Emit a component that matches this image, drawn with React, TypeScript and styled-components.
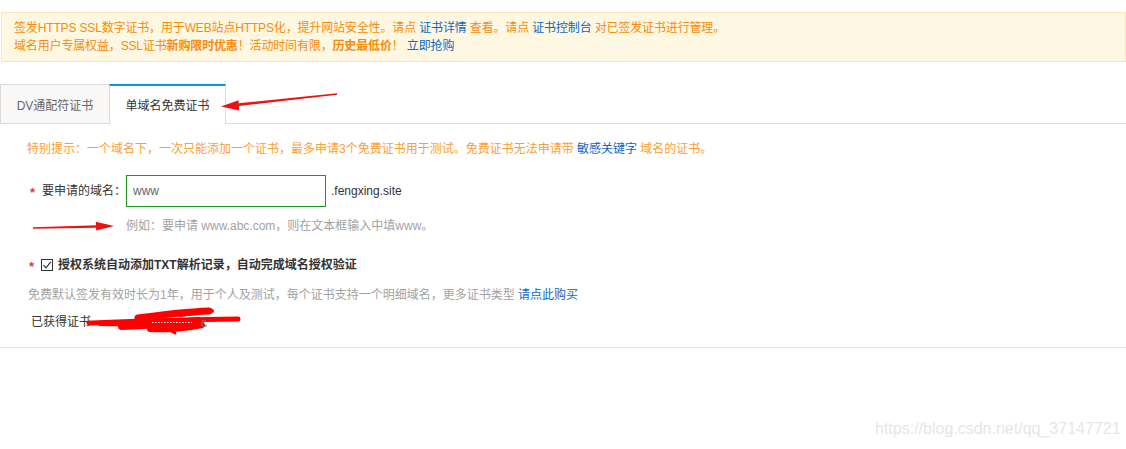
import React from "react";
import styled, { createGlobalStyle } from "styled-components";

const Global = createGlobalStyle`
  html, body { margin: 0; padding: 0; background: #fff; }
  body {
    font-family: "Liberation Sans", "Noto Sans CJK SC", Arial, sans-serif;
    font-size: 12px;
    color: #333;
  }
`;

const Page = styled.div`
  position: relative;
  width: 1126px;
  height: 449px;
  overflow: hidden;
  background: #fff;
`;

const Notice = styled.div`
  margin-top: 12px;
  margin-left: 1px;
  border: 1px solid #f8e5bf;
  background: #fef8e3;
  padding: 6px 12px;
  line-height: 18px;
  color: #f78c0a;
`;

const Line = styled.div`
  white-space: nowrap;
  letter-spacing: -0.15px;
`;

const Link = styled.a`
  color: #0b68c4;
  text-decoration: none;
  cursor: pointer;
`;

const Strong = styled.b`
  font-weight: bold;
`;

const TabBar = styled.div`
  display: flex;
  margin-top: 22px;
  height: 40px;
  box-sizing: border-box;
  border-bottom: 1px solid #dcdcdc;
`;

const Tab = styled.div<{ $active?: boolean }>`
  box-sizing: border-box;
  height: ${(p) => (p.$active ? "40px" : "39px")};
  width: ${(p) => (p.$active ? "117px" : "110px")};
  margin-left: ${(p) => (p.$active ? "-1px" : "0")};
  border: 1px solid #dcdcdc;
  border-bottom: none;
  border-top: ${(p) => (p.$active ? "2px solid #00a0c6" : "1px solid #dcdcdc")};
  background: ${(p) => (p.$active ? "#fff" : "#f9f8f7")};
  color: ${(p) => (p.$active ? "#333" : "#666")};
  display: flex;
  align-items: center;
  justify-content: center;
  padding-bottom: ${(p) => (p.$active ? "1px" : "0")};
  font-size: 12px;
`;

const Content = styled.div`
  padding: 16px 0 16px 27px;
  border-bottom: 1px solid #e6e6e6;
`;

const Hint = styled.div`
  line-height: 18px;
  color: #fa9f36;
  white-space: nowrap;
`;

const FieldRow = styled.div`
  display: flex;
  align-items: center;
  margin-top: 17px;
  padding-left: 3px;
`;

const Star = styled.span`
  display: inline-block;
  width: 12px;
  height: 14px;
  margin-top: 4px;
  color: #e4393c;
  font-size: 13px;
  font-weight: bold;
  line-height: 14px;
`;

const Label = styled.span`
  width: 84px;
  color: #333;
  line-height: 18px;
`;

const Input = styled.input`
  box-sizing: border-box;
  width: 200px;
  height: 32px;
  border: 1px solid #1e961e;
  outline: none;
  padding: 0 6px;
  font-family: "Liberation Sans", "Noto Sans CJK SC", Arial, sans-serif;
  font-size: 12px;
  color: #666;
  background: #fff;
`;

const Suffix = styled.span`
  margin-left: 5px;
  color: #333;
`;

const Example = styled.div`
  margin-top: 10px;
  padding-left: 99px;
  line-height: 18px;
  color: #a2a2a2;
  white-space: nowrap;
`;

const CheckRow = styled.div`
  display: flex;
  align-items: center;
  margin-top: 21px;
  padding-left: 2px;
  height: 18px;
  line-height: 18px;
`;

const Box = styled.span`
  box-sizing: border-box;
  width: 12px;
  height: 12px;
  border: 1px solid #333;
  display: inline-flex;
  align-items: center;
  justify-content: center;
  margin-right: 5px;
  background: #fff;
`;

const CheckLabel = styled.span`
  font-weight: bold;
  color: #333;
`;

const Note = styled.div`
  margin-top: 12px;
  padding-left: 1px;
  line-height: 18px;
  color: #a2a2a2;
  white-space: nowrap;
`;

const Obtained = styled.div`
  margin-top: 9px;
  padding-left: 4px;
  line-height: 18px;
  color: #333;
`;

const Overlay = styled.svg`
  position: absolute;
  left: 0;
  top: 0;
  pointer-events: none;
`;

const Watermark = styled.div`
  position: absolute;
  left: 875px;
  top: 420px;
  font-family: "Liberation Sans", Arial, sans-serif;
  font-size: 16px;
  color: #e6e6e6;
  white-space: nowrap;
`;

export default function App() {
  return (
    <>
      <Global />
      <Page>
        <Notice>
          <Line>
            签发HTTPS SSL数字证书，用于WEB站点HTTPS化，提升网站安全性。请点 <Link>证书详情</Link> 查看。请点{" "}
            <Link>证书控制台</Link> 对已签发证书进行管理。
          </Line>
          <Line>
            域名用户专属权益，SSL证书<Strong>新购限时优惠</Strong>！活动时间有限，<Strong>历史最低价</Strong>！{" "}
            <Link>立即抢购</Link>
          </Line>
        </Notice>

        <TabBar>
          <Tab>DV通配符证书</Tab>
          <Tab $active>单域名免费证书</Tab>
        </TabBar>

        <Content>
          <Hint>
            特别提示：一个域名下，一次只能添加一个证书，最多申请3个免费证书用于测试。免费证书无法申请带 <Link>敏感关键字</Link> 域名的证书。
          </Hint>

          <FieldRow>
            <Star>*</Star>
            <Label>要申请的域名：</Label>
            <Input defaultValue="www" />
            <Suffix>.fengxing.site</Suffix>
          </FieldRow>

          <Example>例如：要申请 www.abc.com，则在文本框输入中填www。</Example>

          <CheckRow>
            <Star>*</Star>
            <Box>
              <svg width="10" height="10" viewBox="0 0 10 10">
                <path d="M1.5 5.2 L4 7.8 L8.8 1.8" fill="none" stroke="#333" strokeWidth="1.2" />
              </svg>
            </Box>
            <CheckLabel>授权系统自动添加TXT解析记录，自动完成域名授权验证</CheckLabel>
          </CheckRow>

          <Note>
            免费默认签发有效时长为1年，用于个人及测试，每个证书支持一个明细域名，更多证书类型 <Link>请点此购买</Link>
          </Note>

          <Obtained>已获得证书</Obtained>
        </Content>

        <Overlay width="1126" height="449" viewBox="0 0 1126 449">
          {/* arrow 1 */}
          <polygon points="337,93.2 337.2,94.8 238.8,106 238.6,103.2" fill="#f01010" />
          <polygon points="221,106.6 239.3,110.5 238.5,100.2" fill="#f01010" />
          {/* arrow 2 */}
          <polygon points="33,227.3 33,228.8 97,227.8 97,225.2" fill="#f01010" />
          <polygon points="114,226 96.2,230.5 95.8,221.8" fill="#f01010" />
          {/* scribble */}
          <g stroke="#ff0000" strokeLinecap="round" strokeLinejoin="round" fill="none">
            <path d="M89 323 C 120 322, 160 320, 238 319" strokeWidth="5" />
            <path d="M138 318 C 160 315, 185 312, 209 311" strokeWidth="7" />
            <path d="M122 326 C 150 325, 175 323, 198 321" strokeWidth="8" />
            <path d="M150 329 C 165 330, 182 329, 202 325" strokeWidth="6" />
            <path d="M180 315 C 195 313, 205 312, 212 311" strokeWidth="4" />
            <path d="M170 330 L 175 333" strokeWidth="3" />
            <path d="M100 324 C 115 324, 125 325, 140 324" strokeWidth="4" />
          </g>
          <path d="M152 322.5 L 192 322.5" stroke="#fff" strokeWidth="1" strokeDasharray="1.5 1.5" />
          <text x="201" y="327" fontSize="12" fill="#777" fontFamily="Liberation Sans, Arial, sans-serif">c</text>
        </Overlay>

        <Watermark>https://blog.csdn.net/qq_37147721</Watermark>
      </Page>
    </>
  );
}
